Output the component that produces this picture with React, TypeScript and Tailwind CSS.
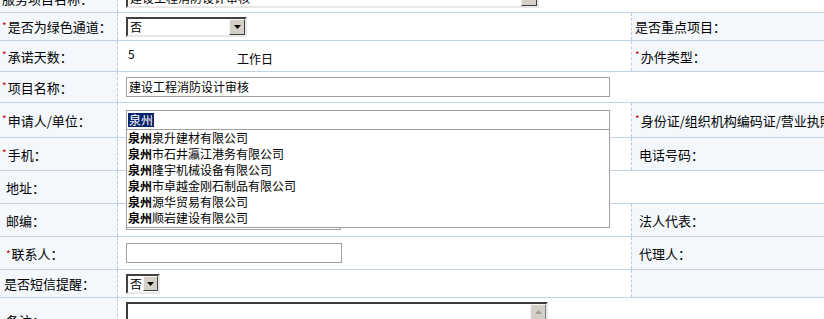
import React from "react";

const Star = () => (
  <span className="text-[#cc0000] text-[10px] leading-none mr-[1px] relative -top-[1px]">*</span>
);

const DownBtn = ({ small }: { small?: boolean }) => (
  <div
    className={`flex items-center justify-center bg-[#d4d0c8] border border-t-[#f4f4f4] border-l-[#f4f4f4] border-b-[#404040] border-r-[#404040] ${
      small ? "w-[15px] h-[15px]" : "w-[16px] h-[16px]"
    }`}
  >
    <svg width="7" height="4" viewBox="0 0 7 4">
      <path d="M0 0 H7 L3.5 4 Z" fill="#000" />
    </svg>
  </div>
);

const Select = ({ w, text }: { w: string; text: string }) => (
  <div
    className={`${w} h-[20px] flex items-center justify-between bg-white border-2 border-t-[#404040] border-l-[#404040] border-b-[#e8e8e8] border-r-[#e8e8e8] pl-[2px] pr-0`}
  >
    <span className="text-[12px] leading-none">{text}</span>
    <DownBtn />
  </div>
);

const Input = ({ w, children }: { w: string; children?: React.ReactNode }) => (
  <div className={`${w} h-[20px] flex items-center bg-white border border-[#a0a0a0] pl-[2px] text-[12px] leading-none`}>
    {children}
  </div>
);

type RowProps = {
  h: string;
  label?: React.ReactNode;
  children?: React.ReactNode;
  right?: React.ReactNode;
  full?: boolean;
  extra?: string;
};

const Row = ({ h, label, children, right, full, extra = "" }: RowProps) => (
  <div className={`flex ${h} border-b border-[#c3d3e6] ${extra}`}>
    <div className="w-[118px] shrink-0 flex items-center pl-[2px] bg-[#f4f8fd] border-r border-dashed border-[#b9c9dc] text-[13px] leading-none whitespace-nowrap">
      {label}
    </div>
    {full ? (
      <div className="flex-1 flex items-center pl-[8px] bg-white">{children}</div>
    ) : (
      <>
        <div className="w-[514px] shrink-0 flex items-center pl-[8px] bg-white border-r border-dashed border-[#b9c9dc]">
          {children}
        </div>
        <div className="flex-1 flex items-center pl-[3px] bg-[#f4f8fd] text-[13px] leading-none whitespace-nowrap">
          {right}
        </div>
      </>
    )}
  </div>
);

const items = [
  "泉升建材有限公司",
  "市石井瀛江港务有限公司",
  "隆宇机械设备有限公司",
  "市卓越金刚石制品有限公司",
  "源华贸易有限公司",
  "顺岩建设有限公司",
];

export default function App() {
  return (
    <div className="w-[824px] h-[319px] overflow-hidden bg-white text-black font-['Noto_Sans_CJK_SC','Noto_Sans',sans-serif]">
      <div className="w-[920px] -mt-[16px]">
        <Row h="h-[29px]" label={<span>服务项目名称：</span>} full>
          <div className="w-[413px] h-[20px] flex items-center justify-between bg-white border-2 border-t-[#404040] border-l-[#404040] border-b-[#e8e8e8] border-r-[#e8e8e8] pl-[2px]">
            <span className="text-[12px] leading-none">建设工程消防设计审核</span>
            <DownBtn />
          </div>
        </Row>
        <Row
          h="h-[28px]"
          label={<><Star />是否为绿色通道：</>}
          right={<span>是否重点项目：</span>}
        >
          <Select w="w-[121px]" text="否" />
        </Row>
        <Row
          h="h-[31px]"
          label={<><Star />承诺天数：</>}
          right={<><Star />办件类型：</>}
        >
          <span className="w-[111px] pl-[2px] text-[12px] leading-none mb-[4px]">5</span>
          <span className="text-[12px] leading-none mt-[5px]">工作日</span>
        </Row>
        <Row h="h-[31px]" label={<><Star />项目名称：</>} full>
          <Input w="w-[484px]">建设工程消防设计审核</Input>
        </Row>
        <Row
          h="h-[35px]"
          label={<><Star />申请人/单位：</>}
          right={<><Star />身份证/组织机构编码证/营业执照：</>}
          extra="relative z-10"
        >
          <div className="relative">
            <Input w="w-[484px]">
              <span className="bg-[#0a246a] text-white px-[1px] -ml-[1px] py-[1px]">泉州</span>
            </Input>
            <div className="absolute left-0 top-full w-[484px] bg-white border border-[#a0a0a0] border-t-0 pt-0 pb-[1px]">
              {items.map((t) => (
                <div key={t} className="h-[16px] flex items-center pl-[1px] text-[12px] leading-none whitespace-nowrap">
                  <span className="font-bold">泉州</span>
                  <span>{t}</span>
                </div>
              ))}
            </div>
          </div>
        </Row>
        <Row
          h="h-[33px]"
          label={<><Star />手机：</>}
          right={<span className="pl-[1px]">&nbsp;电话号码：</span>}
        >
          <Input w="w-[215px]" />
        </Row>
        <Row h="h-[33px]" label={<span className="pl-[1px]">&nbsp;地址：</span>} full>
          <Input w="w-[484px]" />
        </Row>
        <Row
          h="h-[33px]"
          label={<span className="pl-[1px]">&nbsp;邮编：</span>}
          right={<span className="pl-[1px]">&nbsp;法人代表：</span>}
        >
          <Input w="w-[215px]" />
        </Row>
        <Row
          h="h-[33px]"
          label={<span className="pl-[1px]">&nbsp;<Star />联系人：</span>}
          right={<span className="pl-[1px]">&nbsp;代理人：</span>}
        >
          <Input w="w-[216px]" />
        </Row>
        <Row h="h-[28px]" label={<span className="pl-[2px]">是否短信提醒：</span>} right={null}>
          <div className="w-[34px] h-[20px] flex items-center justify-between bg-white border-2 border-t-[#404040] border-l-[#404040] border-b-[#e8e8e8] border-r-[#e8e8e8] pl-[2px]">
            <span className="text-[12px] leading-none">否</span>
            <DownBtn small />
          </div>
        </Row>
        <div className="flex h-[44px]">
          <div className="w-[118px] shrink-0 flex items-center pl-[2px] bg-[#f4f8fd] border-r border-dashed border-[#b9c9dc] text-[13px] leading-none">
            <span className="pl-[1px]">&nbsp;备注：</span>
          </div>
          <div className="flex-1 bg-white pl-[8px] pt-[4px]">
            <div className="w-[422px] h-[50px] flex justify-end bg-white border-2 border-t-[#3a3a3a] border-l-[#3a3a3a] border-b-[#e8e8e8] border-r-[#e8e8e8]">
              <div className="w-[16px] h-full bg-[#ece9e4] flex flex-col">
                <div className="w-[16px] h-[16px] flex items-center justify-center bg-[#d4d0c8] border border-t-[#f4f4f4] border-l-[#f4f4f4] border-b-[#808080] border-r-[#808080]">
                  <svg width="7" height="4" viewBox="0 0 7 4">
                    <path d="M0 4 H7 L3.5 0 Z" fill="#a0a0a0" />
                  </svg>
                </div>
              </div>
            </div>
          </div>
        </div>
      </div>
    </div>
  );
}
